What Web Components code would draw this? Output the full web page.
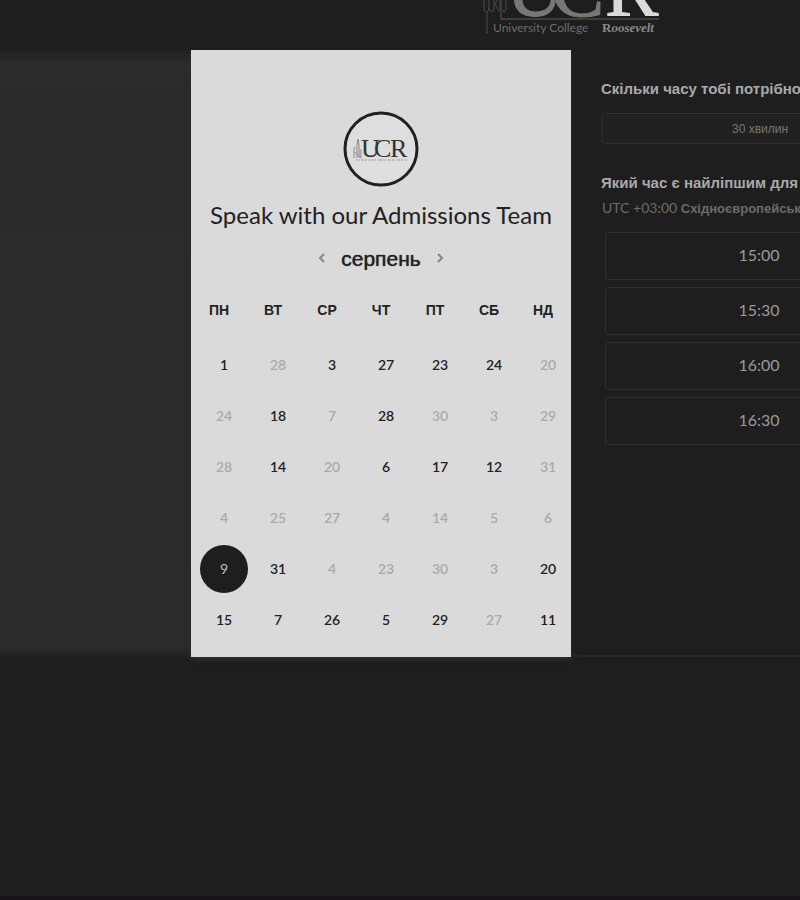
<!DOCTYPE html>
<html lang="uk">
<head>
<meta charset="utf-8">
<title>University College Roosevelt</title>
<style>
html { background: #1e1e1e; }
body { margin: 0; font-family: Lato, "Liberation Sans", sans-serif; }
</style>
</head>
<body>
<booking-page>
  <ucr-logo slot="header"></ucr-logo>
  <month-calendar slot="calendar" heading="Speak with our Admissions Team" month="серпень"></month-calendar>
  <time-picker slot="times">
    <time-slot>15:00</time-slot>
    <time-slot>15:30</time-slot>
    <time-slot>16:00</time-slot>
    <time-slot>16:30</time-slot>
  </time-picker>
</booking-page>

<template id="t-page">
<style>
:host { display: block; overflow-x: auto; scrollbar-width: none; background: #1e1e1e; }
.page { display: flex; flex-direction: column; min-height: 100vh; min-width: max-content; box-sizing: border-box; border-bottom: 4px solid #191318; }
header { height: 50px; display: flex; justify-content: center; align-items: flex-end; overflow: hidden; }
main { display: grid; grid-template-columns: minmax(191px, 1fr) 380px 380px minmax(191px, 1fr); }
.side { background: linear-gradient(#202020, #2c2c2c 14px, #2a2a2a 40px, #2b2b2b calc(100% - 12px), #222); }
.times { border-bottom: 2px solid #272727; }
.card { background: #dadada; box-shadow: 0 3px 5px #303030; }
</style>
<div class="page">
  <header><slot name="header"></slot></header>
  <main>
    <div class="side"></div>
    <div class="card"><slot name="calendar"></slot></div>
    <div class="times"><slot name="times"></slot></div>
    <div></div>
  </main>
</div>
</template>

<template id="t-logo">
<style>
:host { display: block; }
svg { display: block; }
text { font-family: "Liberation Serif", serif; }
.tag { font-family: Lato, sans-serif; font-size: 12px; fill: #6c6c6c; }
.name { font-size: 13px; font-weight: bold; fill: #8a8a8a; }
</style>
<svg width="178" height="100" viewBox="0 0 178 100" role="img" aria-label="UCR University College Roosevelt">
  <g fill="none" stroke="#4a4a4a" stroke-width="1">
    <path d="M2 20V58Q2 62 4 62Q7 62 7 58V34M7 58Q8 62 10 62Q12 62 12 58V40M12 48H17L13 54L17 61M19 40V58Q20 62 22 62Q24 62 24 58V20M10 35V10L14 2L18 10V62M5 62V84"/>
    <path d="M19 62V69H177" stroke="#5a5a5a"/>
  </g>
  <text x="24" y="66" font-size="80" fill="#777" stroke="#777">U</text>
  <text x="69" y="66" font-size="80" fill="#777" stroke="#777">C</text>
  <text x="123" y="66" font-size="80" fill="#dadada" stroke="#dadada">R</text>
  <text class="tag" x="11" y="82">University College</text>
  <text class="name" x="120" y="82">R<tspan font-style="italic">oosevelt</tspan></text>
</svg>
</template>

<template id="t-badge">
<style>
:host { display: block; }
svg { display: block; }
text { font-family: "Liberation Serif", serif; fill: #333; }
</style>
<svg width="76" height="76" viewBox="0 0 76 76" role="img" aria-label="UCR">
  <circle cx="38" cy="38" r="36" fill="#dedede" stroke="#202020" stroke-width="3"/>
  <path d="M11 47V38L12 36M14 47V34L15 28L16 34V47M18 38V47M12 41L18 47" fill="none" stroke="#888"/>
  <text x="18" y="46" font-size="26">U</text>
  <text x="31" y="46" font-size="26">C</text>
  <text x="47" y="46" font-size="26">R</text>
  <path d="M13 49H64" stroke="#999" stroke-dasharray="2 1 1 1 3 1"/>
</svg>
</template>

<template id="t-calendar">
<style>
:host { display: flex; flex-direction: column; align-items: center; padding: 61px 0 12px; color: #222; }
h1 { margin: 13px 0 0; font-size: 24px; line-height: 30px; font-weight: 400; white-space: nowrap; }
.month { display: flex; align-items: center; gap: 14px; margin-top: 13px; height: 32px; }
h2 { margin: 0; font: 400 21px/32px "Liberation Sans", sans-serif; text-shadow: 0 0 1px currentColor; }
button { border: 0; padding: 0; background: none; color: inherit; font: inherit; cursor: pointer; }
.month button { width: 10px; height: 14px; color: #888; }
.month svg { display: block; }
table { align-self: flex-start; margin: 17px -4px 0 6px; width: 378px; table-layout: fixed; border-collapse: collapse; }
th { padding: 0 10px 12px 0; font: 700 14px/20px "Liberation Sans", sans-serif; }
thead tr { height: 47px; }
thead th { vertical-align: middle; }
td { height: 51px; padding: 0; text-align: center; }
td button { display: block; margin: 0 auto; width: 48px; height: 48px; border-radius: 50%; font-size: 14px; font-weight: 600; }
td button:disabled { color: #aaa; cursor: default; }
td button[aria-pressed=true] { background: #1e1e1e; color: #bbb; font-weight: 400; }
</style>
<ucr-badge></ucr-badge>
<h1></h1>
<div class="month">
  <button aria-label="Попередній місяць"><svg width="10" height="14" viewBox="0 0 10 14" fill="none" stroke="currentColor" stroke-width="2"><path d="M7 2L3 6L7 10"/></svg></button>
  <h2></h2>
  <button aria-label="Наступний місяць"><svg width="10" height="14" viewBox="0 0 10 14" fill="none" stroke="currentColor" stroke-width="2"><path d="M3 2L7 6L3 10"/></svg></button>
</div>
<table><thead><tr></tr></thead><tbody></tbody></table>
</template>

<template id="t-picker">
<style>
:host { display: block; padding: 28px 32px 0 30px; color: #a9a9a9; }
h2 { margin: 0; font: 700 15px/22px "Liberation Sans", sans-serif; white-space: nowrap; }
.duration { display: block; width: 100%; height: 31px; margin: 13px 0 28px; border: 1px solid #2e2e2e; border-radius: 4px; background: #212121; color: #777; font: 12px "Liberation Sans", sans-serif; }
.zone { margin: 2px 0 0; padding-left: 1px; font-size: 14px; line-height: 24px; color: #6b6b6b; white-space: nowrap; }
.zone b { font: 700 13px "Liberation Sans", sans-serif; }
.list { display: flex; flex-direction: column; gap: 7px; padding: 12px 4px 0; }
</style>
<h2>Скільки часу тобі потрібно?</h2>
<button class="duration">30 хвилин</button>
<h2>Який час є найліпшим для тебе?</h2>
<p class="zone">UTC +03:00 <b>Східноєвропейський час</b></p>
<div class="list"><slot></slot></div>
</template>

<template id="t-slot">
<style>
:host { display: block; }
button { display: block; width: 100%; height: 48px; padding: 0 2px 4px 0; border: 1px solid #2e2e2e; border-radius: 3px; background: none; color: #999; font: 400 16px Lato, sans-serif; cursor: pointer; }
</style>
<button><slot></slot></button>
</template>

<script>
class Base extends HTMLElement {
  constructor() {
    super();
    this.attachShadow({ mode: "open" }).append(document.getElementById(this.constructor.tpl).content.cloneNode(true));
  }
}
class BookingPage extends Base { static tpl = "t-page"; }
class UcrLogo extends Base { static tpl = "t-logo"; }
class UcrBadge extends Base { static tpl = "t-badge"; }
class TimePicker extends Base { static tpl = "t-picker"; }
class TimeSlot extends Base { static tpl = "t-slot"; }

// "-" marks a day without free times, "*" the selected day
const DAYS = [
  "1 -28 3 27 23 24 -20",
  "-24 18 -7 28 -30 -3 -29",
  "-28 14 -20 6 17 12 -31",
  "-4 -25 -27 -4 -14 -5 -6",
  "*9 31 -4 -23 -30 -3 20",
  "15 7 26 5 29 -27 11"
];
class MonthCalendar extends Base {
  static tpl = "t-calendar";
  connectedCallback() {
    const root = this.shadowRoot;
    root.querySelector("h1").textContent = this.getAttribute("heading");
    root.querySelector("h2").textContent = this.getAttribute("month");
    root.querySelector("thead tr").innerHTML = ["ПН", "ВТ", "СР", "ЧТ", "ПТ", "СБ", "НД"].map(d => `<th scope="col">${d}</th>`).join("");
    root.querySelector("tbody").innerHTML = DAYS.map(week => "<tr>" + week.split(" ").map(d => {
      const state = d[0] === "-" ? "disabled" : d[0] === "*" ? 'aria-pressed="true"' : "";
      return `<td><button ${state}>${d.replace(/[-*]/, "")}</button></td>`;
    }).join("") + "</tr>").join("");
  }
}
customElements.define("ucr-logo", UcrLogo);
customElements.define("ucr-badge", UcrBadge);
customElements.define("time-slot", TimeSlot);
customElements.define("time-picker", TimePicker);
customElements.define("month-calendar", MonthCalendar);
customElements.define("booking-page", BookingPage);
</script>
</body>
</html>
